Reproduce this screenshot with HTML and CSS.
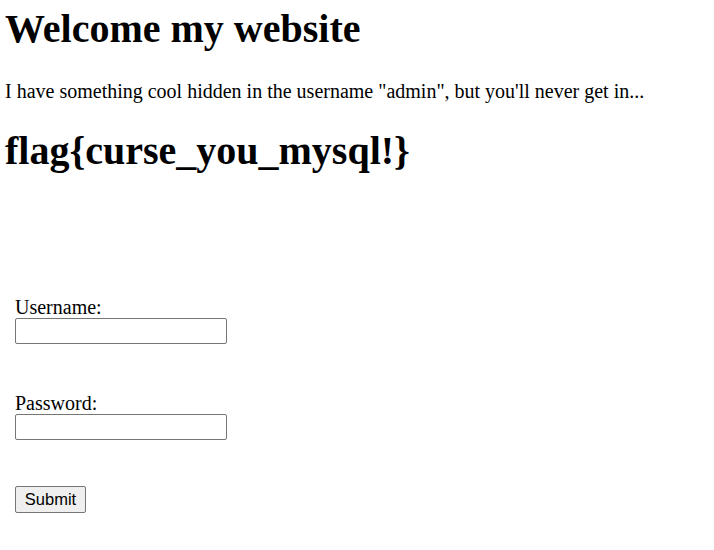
FILE: index.html
```html
<!DOCTYPE html>
<html>
<head>
<meta charset="utf-8">
<title>Welcome</title>
<link rel="stylesheet" href="styles.css">
</head>
<body>
<h1 class="title">Welcome my website</h1>
<p class="intro">I have something cool hidden in the username "admin", but you'll never get in...</p>
<h1 class="flag">flag{curse_you_mysql!}</h1>
<form class="login">
  <div class="field">
    <label class="label" for="u">Username:</label>
    <input class="input" id="u" type="text">
  </div>
  <div class="field field-pass">
    <label class="label" for="p">Password:</label>
    <input class="input" id="p" type="password">
  </div>
  <div class="field field-submit">
    <button class="submit" type="button">Submit</button>
  </div>
</form>
</body>
</html>
```
FILE: styles.css
```css
html, body {
  margin: 0;
  padding: 0;
  background: #fff;
}
body {
  padding: 0 5px;
  font-family: "Liberation Serif", "Times New Roman", serif;
  font-size: 20px;
  color: #000;
}
.title {
  font-size: 40px;
  font-weight: bold;
  margin: 0;
  padding-top: 6px;
  line-height: 46px;
}
.intro {
  margin: 28px 0 0;
  line-height: 23px;
}
.flag {
  font-size: 40px;
  font-weight: bold;
  margin: 25px 0 0;
  line-height: 46px;
}
.login {
  margin-top: 122px;
  padding-left: 10px;
  display: flex;
  flex-direction: column;
}
.field {
  display: flex;
  flex-direction: column;
  align-items: flex-start;
}
.field-pass {
  margin-top: 48px;
}
.field-submit {
  margin-top: 46px;
}
.label {
  line-height: 22px;
}
.input {
  box-sizing: border-box;
  width: 212px;
  height: 26px;
  border: 1px solid #767676;
  border-radius: 2px;
  padding: 1px 2px;
  margin: 0;
}
.submit {
  box-sizing: border-box;
  width: 71px;
  height: 27px;
  font-family: "Liberation Sans", Arial, sans-serif;
  font-size: 16.5px;
  background: #efefef;
  border: 1px solid #767676;
  border-radius: 2px;
  padding: 0;
  margin: 0;
  color: #000;
}
```
